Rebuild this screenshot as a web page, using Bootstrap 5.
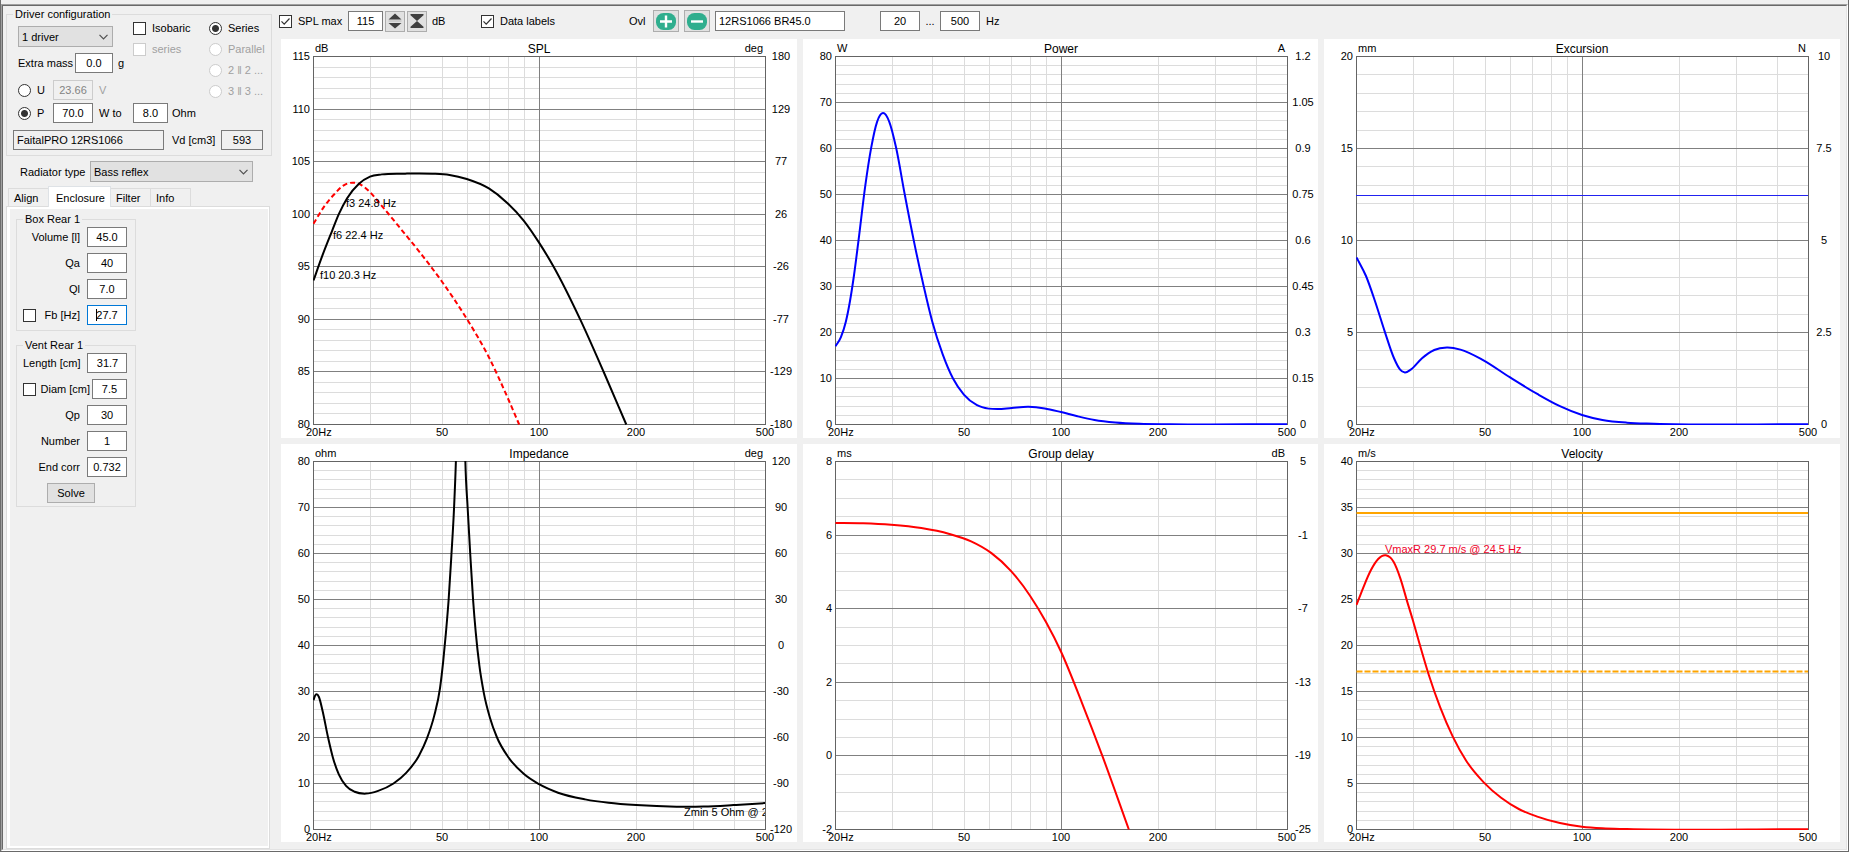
<!DOCTYPE html>
<html lang="en">
<head>
<meta charset="utf-8">
<meta name="viewport" content="width=device-width, initial-scale=1">
<title>Loudspeaker enclosure simulator</title>
<link href="https://cdn.jsdelivr.net/npm/bootstrap@5.3.0/dist/css/bootstrap.min.css" rel="stylesheet">
<style>
  :root { --face: #f0f0f0; --edge: #dcdcdc; --ctl: #7a7a7a; }
  body { background: var(--face); color: #000; font: 11px/14px "Liberation Sans", sans-serif; }

  /* window bevel */
  .window-frame { border: 1px solid #696969; border-top: 0; border-left-color: #6d6d6d; padding-top: 4px; }
  .client-area { border: 1px solid #a0a0a0; border-right-color: #fff; border-bottom-color: #fff; }
  .client-inner { border: 1px solid #696969; border-right-color: #e3e3e3; border-bottom-color: #e3e3e3; min-width: 0; }

  /* controls */
  .field { height: 20px; width: 40px; border: 1px solid var(--ctl); border-radius: 0; background: #fff; color: #000; padding: 0 2px; text-align: center; font: inherit; flex: none; }
  .field:focus { outline: 0; }
  .field[readonly] { background: var(--face); }
  .field:disabled { background: var(--face); color: #838383; border-color: #ccc; }
  .field.text-start { padding-left: 3px; }
  .field-active { border-color: #0078d7; background: linear-gradient(#000, #000) 8px 3px / 1px 12px no-repeat #fff; }
  .field-35 { width: 35px; }
  .field-38 { width: 38px; }
  .field-42 { width: 42px; }
  .field-130 { width: 130px; }
  .field-151 { width: 151px; }
  .combo { height: 21px; border: 1px solid #adadad; border-radius: 0; color: #000; font: inherit; padding: 0 20px 0 3px; appearance: none; flex: none;
    background: #e1e1e1 url("data:image/svg+xml,%3Csvg xmlns='http://www.w3.org/2000/svg' viewBox='0 0 9 6'%3E%3Cpath d='M.5.8l4 4 4-4' fill='none' stroke='%23505050' stroke-width='1.2'/%3E%3C/svg%3E") no-repeat right 4px center / 9px 6px; }
  .combo-95 { width: 95px; }
  .combo-163 { width: 163px; }
  .tick { appearance: none; width: 13px; height: 13px; margin: 0; border: 1px solid #333; background: #fff; flex: none; }
  .tick:checked { background: #fff url("data:image/svg+xml,%3Csvg xmlns='http://www.w3.org/2000/svg' viewBox='0 0 11 11'%3E%3Cpath d='M1.5 5.4l2.7 2.8 5.3-5.7' fill='none' stroke='%23333' stroke-width='1.2'/%3E%3C/svg%3E") center / 11px 11px; }
  .tick-round { border-radius: 50%; }
  .tick-round:checked { background: radial-gradient(circle, #333 3px, #fff 4px); }
  .tick:disabled { border-color: #ccc; }
  .dim { color: #a0a0a0; }
  .pick { display: flex; align-items: center; gap: 6px; white-space: nowrap; }
  .push { border: 1px solid #adadad; background: #e1e1e1; color: #000; padding: 0; display: flex; align-items: center; justify-content: center; font: inherit; flex: none; }

  /* sidebar */
  .sidebar { width: 271px; padding: 1px 0 0 3px; flex: none; }
  .group-box { border: 1px solid var(--edge); }
  .group-box legend { float: none; width: auto; font-size: 11px; line-height: 14px; margin: 0 0 0 6px; padding: 0 2px; }
  .driver-box { width: 266px; padding: 0 8px 5px 6px; }
  .driver-box legend { margin: 0; }
  .driver-grid { padding: 0 0 7px 5px; }
  .drive-side { width: 191px; flex: none; }
  .pick-list { display: flex; flex-direction: column; gap: 7px; }
  .top-left { padding-top: 5px; gap: 6px; width: 95px; }
  .mass-row { width: 107px; height: 20px; gap: 5px; }
  .mass-row label { width: 52px; white-space: nowrap; }
  .drive-row { height: 20px; margin-top: 3px; }
  .drive-row.first-row { margin-top: 7px; }
  .drive-row .pick { width: 35px; }
  .drive-unit { width: 40px; padding-left: 6px; }
  .radiator-row { padding: 5px 0 0 14px; height: 26px; }
  .radiator-row label { width: 70px; }

  .tab-strip { margin: 4px 0 0 2px; border: 0; align-items: flex-end; }
  .tab-strip .nav-link { border: 1px solid var(--edge); border-bottom: 0; border-radius: 0; margin: 0 0 0 -1px; color: #000; background: var(--face); width: 41px; height: 18px; padding: 1px 0 0 5px; text-align: left; line-height: 14px; }
  .tab-strip .nav-link.active { background: #fff; color: #000; width: 63px; height: 21px; padding: 2px 0 0 7px; margin-bottom: -1px; position: relative; }
  .tab-strip li:first-child .nav-link { margin-left: 0; }
  .tab-frame { border: 1px solid var(--edge); background: #fff; padding: 2px 1px 2px 3px; width: 264px; }
  .tab-face { background: var(--face); padding: 3px 6px; gap: 7px; }
  .param-box { width: 120px; padding: 0; }
  .param-list { padding: 1px 8px 5px 6px; gap: 6px; }
  .param-list.with-action { padding-bottom: 3px; }
  .param-row { display: flex; align-items: center; height: 20px; }
  .param-row label { flex: 1; text-align: right; padding-right: 7px; white-space: nowrap; }
  .param-row label.tight { padding-right: 2px; }
  .push-solve { width: 48px; height: 20px; margin-left: 24px; }

  /* toolbar */
  .toolbar { height: 33px; padding: 4px 0 7px 5px; display: flex; align-items: center; white-space: nowrap; }
  .seg-spl { width: 69px; }
  .seg-db { width: 54px; padding-left: 5px; }
  .seg-labels { width: 148px; }
  .seg-ovl { width: 24px; }
  .seg-dots { width: 20px; text-align: center; }
  .seg-hz { padding-left: 6px; }
  .gap-2px { gap: 2px; }
  .gap-5px { gap: 5px; }
  .range { margin-left: 35px; }
  .push-spin { width: 20px; height: 21px; }
  .push-ovl { width: 26px; height: 22px; }

  /* charts */
  .chart-grid { display: grid; grid-template-columns: repeat(3, minmax(280px, 1fr)); grid-template-rows: repeat(2, minmax(240px, 1fr)); gap: 6px; margin: 0 6px 7px 7px; flex: 1; }
  .chart { background: #fff; position: relative; overflow: hidden; }
  .chart svg { position: absolute; inset: 0; width: 100%; height: 100%; }
  .chart text { font: 11px "Liberation Sans", sans-serif; }
  .chart .plot-title { font-size: 12px; }
  @media (max-width: 1180px) {
    .chart-grid { grid-template-columns: minmax(280px, 1fr); grid-template-rows: none; grid-auto-rows: 360px; }
    .toolbar { flex-wrap: wrap; height: auto; row-gap: 4px; }
  }
</style>
</head>
<body>
<div class="window-frame min-vh-100 d-flex">
 <div class="client-area flex-grow-1 d-flex">
  <div class="client-inner flex-grow-1 d-flex">

  <aside class="sidebar d-flex flex-column">
    <fieldset class="group-box driver-box">
      <legend>Driver configuration</legend>
      <div class="driver-grid d-flex">
        <div class="drive-side">
          <div class="d-flex">
            <div class="top-left d-flex flex-column">
              <select class="combo combo-95" aria-label="Driver count"><option>1 driver</option></select>
              <div class="mass-row d-flex align-items-center">
                <label for="mass">Extra mass</label>
                <input id="mass" class="field field-38" value="0.0">
                <span>g</span>
              </div>
            </div>
            <div class="pick-list ps-3 ms-1">
              <label class="pick"><input type="checkbox" class="tick"> Isobaric</label>
              <label class="pick dim"><input type="checkbox" class="tick" disabled> series</label>
            </div>
          </div>
          <div class="drive-row first-row d-flex align-items-center">
            <label class="pick"><input type="radio" name="drive" class="tick tick-round"> U</label>
            <input class="field" value="23.66" disabled aria-label="Voltage">
            <span class="drive-unit dim">V</span>
          </div>
          <div class="drive-row d-flex align-items-center">
            <label class="pick"><input type="radio" name="drive" class="tick tick-round" checked> P</label>
            <input class="field" value="70.0" aria-label="Power">
            <span class="drive-unit">W to</span>
            <input class="field field-35" value="8.0" aria-label="Load">
            <span class="ps-1">Ohm</span>
          </div>
        </div>
        <div class="pick-list">
          <label class="pick"><input type="radio" name="wiring" class="tick tick-round" checked> Series</label>
          <label class="pick dim"><input type="radio" name="wiring" class="tick tick-round" disabled> Parallel</label>
          <label class="pick dim"><input type="radio" name="wiring" class="tick tick-round" disabled> 2 ‖ 2 ...</label>
          <label class="pick dim"><input type="radio" name="wiring" class="tick tick-round" disabled> 3 ‖ 3 ...</label>
        </div>
      </div>
      <div class="d-flex align-items-center">
        <input class="field field-151 text-start" value="FaitalPRO 12RS1066" readonly aria-label="Driver">
        <label for="vd" class="ms-2 me-auto">Vd [cm3]</label>
        <input id="vd" class="field field-42" value="593" readonly>
      </div>
    </fieldset>

    <div class="radiator-row d-flex align-items-center">
      <label for="radiator">Radiator type</label>
      <select id="radiator" class="combo combo-163"><option>Bass reflex</option></select>
    </div>

    <ul class="nav nav-tabs tab-strip" role="tablist">
      <li class="nav-item"><button type="button" class="nav-link" role="tab">Align</button></li>
      <li class="nav-item"><button type="button" class="nav-link active" role="tab" aria-selected="true">Enclosure</button></li>
      <li class="nav-item"><button type="button" class="nav-link" role="tab">Filter</button></li>
      <li class="nav-item"><button type="button" class="nav-link" role="tab">Info</button></li>
    </ul>
    <div class="tab-frame flex-grow-1 d-flex" role="tabpanel">
      <div class="tab-face flex-grow-1 d-flex flex-column">
        <fieldset class="group-box param-box">
          <legend>Box Rear 1</legend>
          <div class="param-list d-flex flex-column">
            <div class="param-row"><label for="vol">Volume [l]</label><input id="vol" class="field" value="45.0"></div>
            <div class="param-row"><label for="qa">Qa</label><input id="qa" class="field" value="40"></div>
            <div class="param-row"><label for="ql">Ql</label><input id="ql" class="field" value="7.0"></div>
            <div class="param-row"><input type="checkbox" class="tick" aria-label="Lock Fb"><label for="fb">Fb [Hz]</label><input id="fb" class="field field-active" value="27.7"></div>
          </div>
        </fieldset>
        <fieldset class="group-box param-box">
          <legend>Vent Rear 1</legend>
          <div class="param-list with-action d-flex flex-column">
            <div class="param-row"><label for="len">Length [cm]</label><input id="len" class="field" value="31.7"></div>
            <div class="param-row"><input type="checkbox" class="tick" aria-label="Lock diameter"><label for="diam" class="tight">Diam [cm]</label><input id="diam" class="field field-35" value="7.5"></div>
            <div class="param-row"><label for="qp">Qp</label><input id="qp" class="field" value="30"></div>
            <div class="param-row"><label for="num">Number</label><input id="num" class="field" value="1"></div>
            <div class="param-row"><label for="endc">End corr</label><input id="endc" class="field" value="0.732"></div>
            <button type="button" class="push push-solve">Solve</button>
          </div>
        </fieldset>
      </div>
    </div>
  </aside>

  <main class="flex-grow-1 d-flex flex-column">
    <div class="toolbar">
      <label class="pick seg-spl"><input type="checkbox" class="tick" checked> SPL max</label>
      <div class="d-flex align-items-center gap-2px">
        <input class="field field-35" value="115" aria-label="SPL maximum">
        <button type="button" class="push push-spin" aria-label="Shift scale">
          <svg width="14" height="16" viewBox="0 0 14 16" fill="#404040"><path d="M7 .5L13.5 6.5H.5zM7 15.5L13.5 10H.5z"/><path d="M.5 8h13" stroke="#bbb"/></svg>
        </button>
        <button type="button" class="push push-spin" aria-label="Zoom scale">
          <svg width="14" height="16" viewBox="0 0 14 16" fill="#404040"><path d="M.5 1h13v1.2L7 8 .5 2.2zM.5 15h13v-1.2L7 8 .5 13.8z"/></svg>
        </button>
      </div>
      <span class="seg-db">dB</span>
      <label class="pick seg-labels"><input type="checkbox" class="tick" checked> Data labels</label>
      <span class="seg-ovl">Ovl</span>
      <div class="d-flex align-items-center gap-5px">
        <button type="button" class="push push-ovl" aria-label="Add overlay">
          <svg width="20" height="17" viewBox="0 0 20 17"><rect width="20" height="17" rx="7.500" fill="#2fae8e"/><path d="M4 8.500h12M10 2.500v12" stroke="#fff" stroke-width="2.400"/></svg>
        </button>
        <button type="button" class="push push-ovl" aria-label="Remove overlay">
          <svg width="20" height="17" viewBox="0 0 20 17"><rect width="20" height="17" rx="7.500" fill="#2fae8e"/><path d="M4 8.500h12" stroke="#fff" stroke-width="2.400"/></svg>
        </button>
        <input class="field field-130 text-start" value="12RS1066 BR45.0" aria-label="Overlay name">
      </div>
      <div class="d-flex align-items-center range">
        <input class="field" value="20" aria-label="From frequency">
        <span class="seg-dots">...</span>
        <input class="field" value="500" aria-label="To frequency">
        <span class="seg-hz">Hz</span>
      </div>
    </div>
    <div class="chart-grid" id="charts"></div>
  </main>

  </div>
 </div>
</div>
<script src="https://cdn.jsdelivr.net/npm/bootstrap@5.3.0/dist/js/bootstrap.bundle.min.js"></script>
<script>
// Curve points are [position along the log frequency axis in 1/1000, value on the left scale].
const charts = [
  { title: 'SPL', unit: 'dB', unit2: 'deg', min: 80, max: 115, major: 5, minor: 1,
    right: ['180', '129', '77', '26', '-26', '-77', '-129', '-180'],
    curves: [
      { color: 'red', dash: '5 3', pts: [[0,99.1],[23,100.7],[46,101.9],[65,102.7],[87,103],[105,102.8],[125,102.1],[151,100.8],[197,98.4],[233,96.5],[284,93.6],[339,90.06],[388,86.4],[430,82.5],[455,80]] },
      { color: '#000', pts: [[0,93.7],[20,96.1],[41,98.4],[56,100],[74,101.5],[100,102.87],[125,103.57],[151,103.79],[203,103.86],[263,103.85],[301,103.73],[339,103.35],[388,102.45],[428,101.1],[465,99.4],[499,97.3],[530,95.1],[590,90],[643,84.9],[692,80]] }
    ],
    notes: [[74, 100.6, 'f3 24.8 Hz'], [44, 97.6, 'f6 22.4 Hz'], [15, 93.8, 'f10 20.3 Hz']] },
  { title: 'Power', unit: 'W', unit2: 'A', min: 0, max: 80, major: 10, minor: 2,
    right: ['1.2', '1.05', '0.9', '0.75', '0.6', '0.45', '0.3', '0.15', '0'],
    curves: [{ color: 'blue', pts: [[0,17],[12,19],[23,22.4],[32,26.8],[41,32.5],[51,40.1],[66,52],[79,60.2],[92,65.8],[105,67.7],[119,65.8],[134,60.2],[153,50.1],[174,39.6],[195,30.1],[214,22.4],[237,15.3],[260,10],[284,6.5],[313,4.2],[339,3.45],[359,3.35],[390,3.6],[427,3.85],[463,3.5],[499,2.7],[535,1.8],[573,1],[619,.45],[673,.15],[740,.05],[1000,.05]] }],
    notes: [] },
  { title: 'Excursion', unit: 'mm', unit2: 'N', min: 0, max: 20, major: 5, minor: 1,
    right: ['10', '7.5', '5', '2.5', '0'],
    curves: [
      { color: '#2222f0', thin: true, pts: [[0,12.42],[1000,12.42]] },
      { color: 'blue', pts: [[0,9.08],[21,8.07],[41,6.7],[62,5.09],[83,3.6],[96,3],[107,2.83],[120,2.98],[145,3.6],[172,4.05],[200,4.18],[230,4.07],[280,3.5],[339,2.57],[400,1.66],[450,1],[499,.52],[544,.25],[598,.1],[658,.04],[1000,.02]] }
    ],
    notes: [] },
  { title: 'Impedance', unit: 'ohm', unit2: 'deg', min: 0, max: 80, major: 10, minor: 2,
    right: ['120', '90', '60', '30', '0', '-30', '-60', '-90', '-120'],
    curves: [{ color: '#000', pts: [[0,28.1],[3,29],[7,29.4],[12,28.8],[20,25.8],[32,20.1],[43,15.6],[56,12],[72,9.5],[91,8.2],[116,7.8],[143,8.4],[177,10],[205,12.3],[233,16],[251,19.8],[267,24.7],[280,30.8],[287,36.6],[293,42.8],[299,50],[305,59.5],[311,70],[315,80],[320,100],[326,140],[332,100],[336,80],[341,70],[347,59.5],[353,50],[359,42.8],[367,35.6],[377,29.6],[390,24.4],[406,20],[432,15.6],[465,12.1],[499,9.85],[541,8],[601,6.55],[653,5.8],[714,5.3],[803,4.95],[863,4.98],[929,5.3],[1000,5.75]] }],
    notes: [[820, 2.8, 'Zmin 5 Ohm @ 282 Hz']] },
  { title: 'Group delay', unit: 'ms', unit2: 'dB', min: -2, max: 8, major: 2, minor: 0.5,
    right: ['5', '-1', '-7', '-13', '-19', '-25'],
    curves: [{ color: 'red', pts: [[0,6.33],[61,6.32],[123,6.28],[190,6.19],[252,6.03],[300,5.83],[345,5.51],[388,5.03],[430,4.36],[466,3.63],[499,2.83],[545,1.45],[591,-.02],[649,-2]] }],
    notes: [] },
  { title: 'Velocity', unit: 'm/s', unit2: '', min: 0, max: 40, major: 5, minor: 1, right: [],
    curves: [
      { color: 'orange', pts: [[0,34.4],[1000,34.4]] },
      { color: 'orange', dash: '6 2', pts: [[0,17.18],[1000,17.18]] },
      { color: 'red', pts: [[0,24.4],[15,26.3],[32,28.2],[48,29.4],[65,29.8],[82,29.1],[97,27.3],[112,24.8],[125,22.7],[140,20.1],[160,16.8],[185,13.3],[213,10.1],[243,7.45],[282,5.1],[320,3.45],[360,2.2],[400,1.4],[450,.7],[499,.3],[544,.13],[598,.05],[1000,.03]] }
    ],
    notes: [[65, 30, 'VmaxR 29.7 m/s @ 24.5 Hz', '#f00028']] }
];
const pad = { left: 32, right: 32, top: 17, bottom: 14 };
const logPos = f => Math.log(f / 20) / Math.log(25);

// Cubic through the points with parabolic tangents, written as Bezier segments.
function smooth(p) {
  const n = p.length, d = [], m = [];
  for (let i = 0; i < n - 1; i++) d.push((p[i+1][1] - p[i][1]) / (p[i+1][0] - p[i][0]));
  for (let i = 0; i < n; i++) {
    if (i === 0) m.push(d[0]);
    else if (i === n - 1) m.push(d[n-2]);
    else {
      const a = p[i][0] - p[i-1][0], b = p[i+1][0] - p[i][0];
      m.push((b * d[i-1] + a * d[i]) / (a + b));
    }
  }
  let s = `M${p[0][0].toFixed(1)} ${p[0][1].toFixed(1)}`;
  for (let i = 0; i < n - 1; i++) {
    const h = (p[i+1][0] - p[i][0]) / 3;
    s += `C${[p[i][0] + h, p[i][1] + m[i]*h, p[i+1][0] - h, p[i+1][1] - m[i+1]*h, p[i+1][0], p[i+1][1]].map(v => v.toFixed(2)).join(' ')}`;
  }
  return s;
}

function draw(box, c, id) {
  const W = Math.floor(box.clientWidth), H = Math.floor(box.clientHeight);
  const L = pad.left, T = pad.top, w = W - L - pad.right, h = H - T - pad.bottom, R = L + w, B = T + h;
  const X = u => L + u * w, Y = v => T + (c.max - v) / (c.max - c.min) * h;
  const px = v => Math.round(v) + 0.5;
  let minor = '', major = '', txt = '';
  const text = (x, y, s, anchor = 'start', extra = '') => `<text x="${Math.round(x)}" y="${Math.round(y)}" text-anchor="${anchor}" ${extra}>${s}</text>`;
  for (const f of [30, 40, 50, 60, 70, 80, 90, 200, 300, 400]) minor += `M${px(X(logPos(f)))} ${T}V${B}`;
  for (let v = c.min; v <= c.max + 1e-6; v += c.minor) minor += `M${L} ${px(Y(v))}H${R}`;
  major += `M${px(X(logPos(100)))} ${T}V${B}`;
  let k = 0;
  for (let v = c.max; v >= c.min - 1e-6; v -= c.major, k++) {
    major += `M${L} ${px(Y(v))}H${R}`;
    txt += text(L - 3, Y(v) + 4, v, 'end');
    if (c.right[k]) txt += text(R + 16, Y(v) + 4, c.right[k], 'middle');
  }
  txt += text(L - 7, B + 12, '20Hz');
  for (const f of [50, 100, 200, 500]) txt += text(X(logPos(f)), B + 12, f, 'middle');
  txt += text(L + 2, T - 4, c.unit);
  if (c.unit2) txt += text(R - 2, T - 4, c.unit2, 'end');
  txt += text(L + w / 2, T - 3, c.title, 'middle', 'class="plot-title"');
  const lines = c.curves.map(s => `<path d="${smooth(s.pts.map(([u, v]) => [X(u / 1000) + .5, Y(v) + .5]))}" stroke="${s.color}" stroke-width="${s.thin ? 1 : 2}" ${s.thin ? 'shape-rendering="crispEdges"' : ''} ${s.dash ? `stroke-dasharray="${s.dash}"` : ''}/>`).join('');
  const notes = c.notes.map(([u, v, s, col]) => text(X(u / 1000), Y(v), s, 'start', `fill="${col || '#000'}"`)).join('');
  box.innerHTML = `<svg role="img" aria-label="${c.title}"><clipPath id="${id}"><rect x="${L}" y="${T}" width="${w}" height="${h + 1}"/></clipPath>
    <g fill="none" shape-rendering="crispEdges"><path d="${minor}" stroke="#dcdcdc"/><path d="${major}" stroke="#808080"/></g>
    <rect x="${L + .5}" y="${T + .5}" width="${w}" height="${h}" fill="none" stroke="#646464" shape-rendering="crispEdges"/>
    <g clip-path="url(#${id})"><g fill="none">${lines}</g>${notes}</g>${txt}</svg>`;
}

const grid = document.getElementById('charts');
const boxes = charts.map(() => grid.appendChild(Object.assign(document.createElement('div'), { className: 'chart' })));
const drawAll = () => boxes.forEach((b, i) => draw(b, charts[i], 'plot' + i));
drawAll();
window.addEventListener('resize', drawAll);
</script>
</body>
</html>
